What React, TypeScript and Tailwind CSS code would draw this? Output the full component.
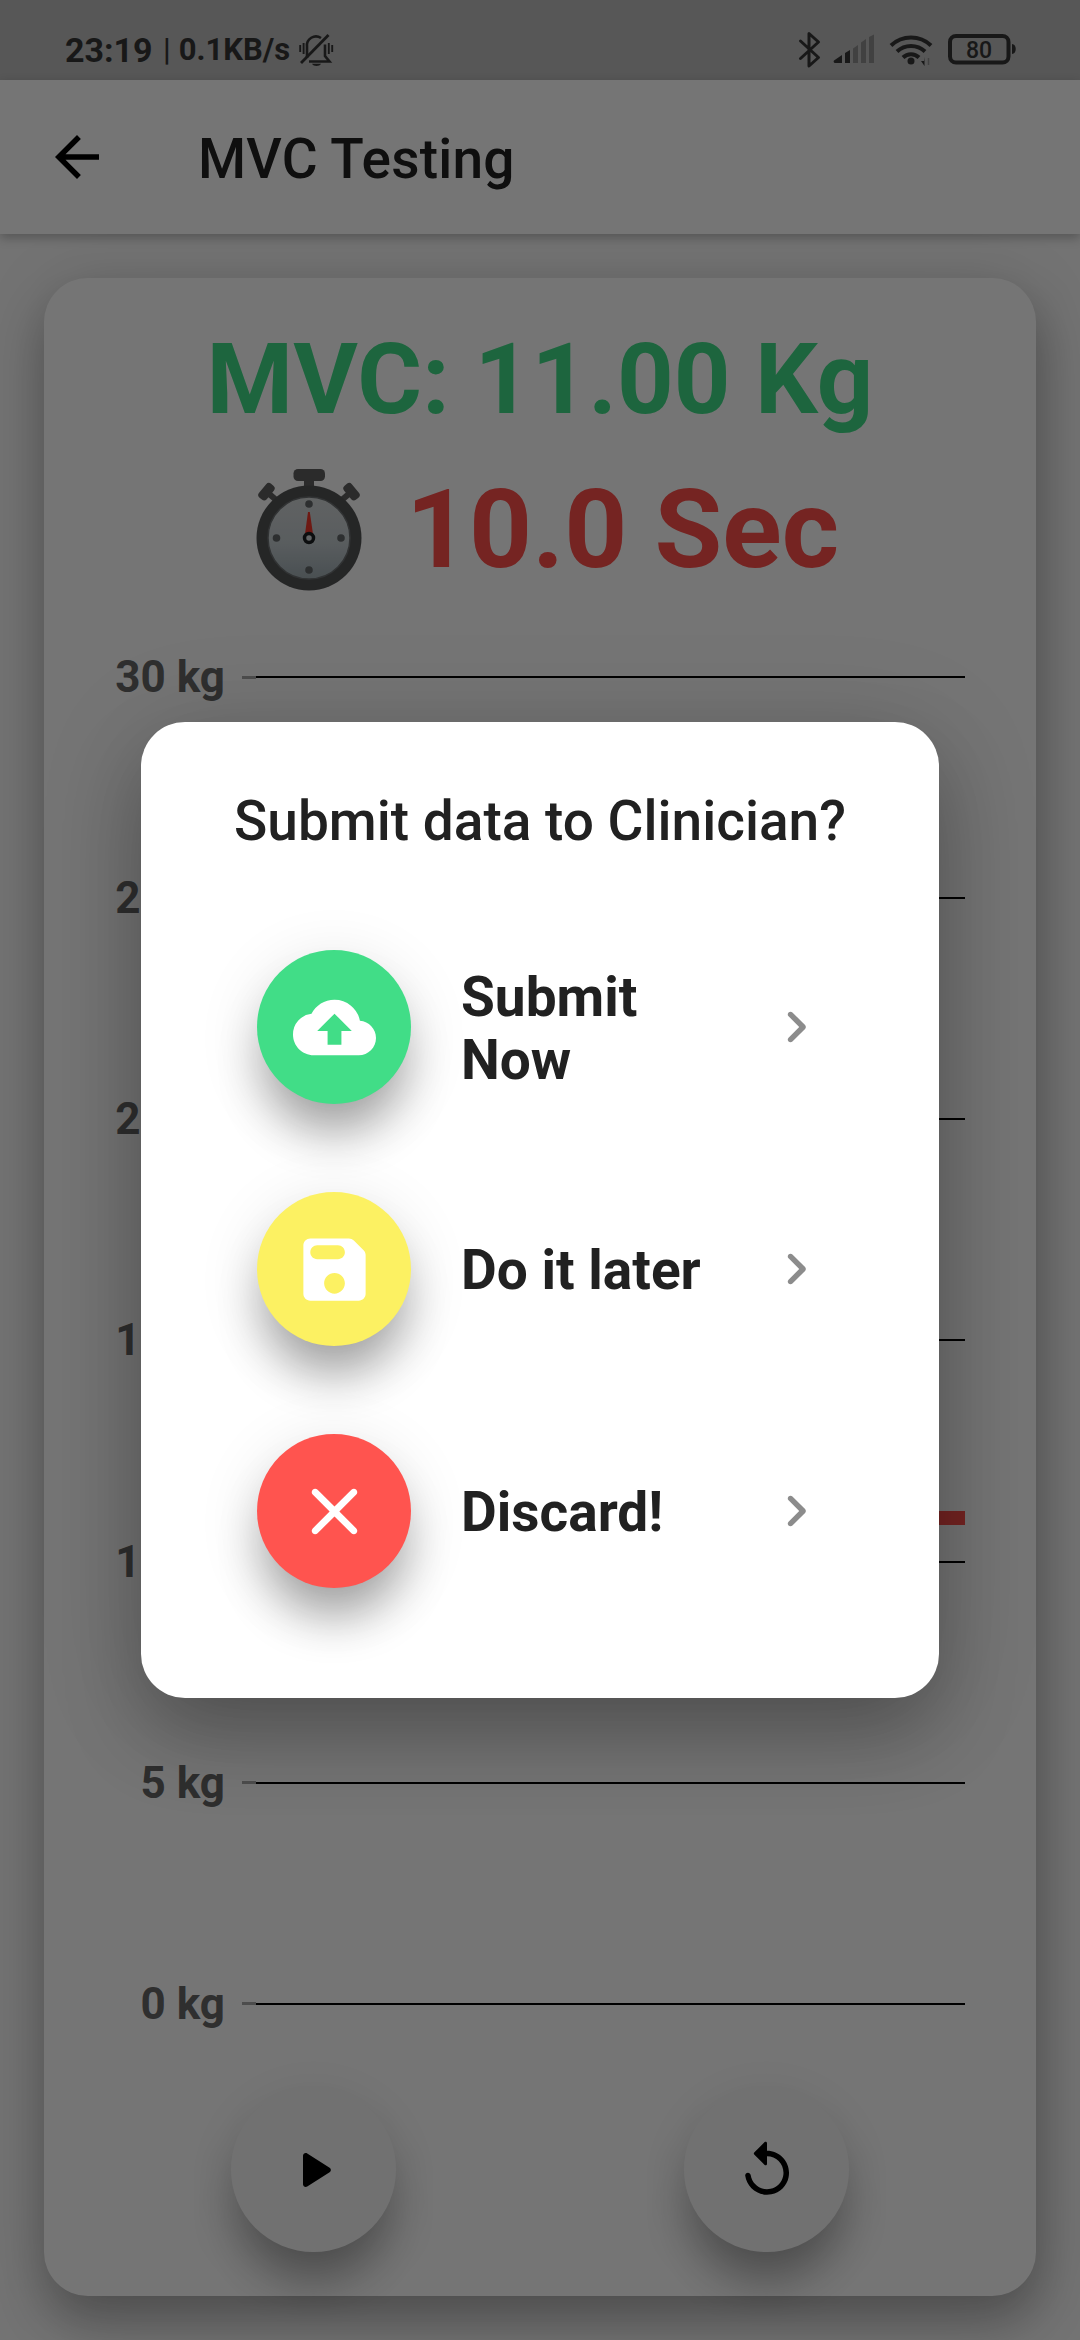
import React from "react";
import { MdArrowBack, MdCloudUpload } from "react-icons/md";

const levels = [30, 25, 20, 15, 10, 5, 0];

const ICON = {
  save: "M17.59 3.59c-.38-.38-.89-.59-1.42-.59H5c-1.11 0-2 .9-2 2v14c0 1.1.9 2 2 2h14c1.1 0 2-.9 2-2V7.83c0-.53-.21-1.04-.59-1.41l-2.82-2.83zM12 19c-1.66 0-3-1.34-3-3s1.34-3 3-3 3 1.34 3 3-1.34 3-3 3zm1-10H7c-1.1 0-2-.9-2-2s.9-2 2-2h6c1.1 0 2 .9 2 2s-.9 2-2 2z",
  close:
    "M18.3 5.71c-.39-.39-1.02-.39-1.41 0L12 10.59 7.11 5.7c-.39-.39-1.02-.39-1.41 0s-.39 1.02 0 1.41L10.59 12 5.7 16.89c-.39.39-.39 1.02 0 1.41s1.02.39 1.41 0L12 13.41l4.89 4.89c.39.39 1.02.39 1.41 0s.39-1.02 0-1.41L13.41 12l4.89-4.89c.38-.38.38-1.02 0-1.4z",
  chevron:
    "M9.29 6.71c-.39.39-.39 1.02 0 1.41L13.17 12l-3.88 3.88c-.39.39-.39 1.02 0 1.41.39.39 1.02.39 1.41 0l4.59-4.59c.39-.39.39-1.02 0-1.41L10.7 6.7c-.38-.38-1.02-.38-1.41.01z",
  play: "M8 6.82v10.36c0 .79.87 1.27 1.54.84l8.14-5.18c.62-.39.62-1.29 0-1.69L9.54 5.98C8.87 5.55 8 6.03 8 6.82z",
  replay:
    "M12 5V2.21c0-.45-.54-.67-.85-.35l-3.8 3.79c-.2.2-.2.51 0 .71l3.79 3.79c.32.31.86.09.86-.36V7c3.73 0 6.68 3.42 5.86 7.29-.47 2.27-2.31 4.1-4.57 4.57-3.57.75-6.75-1.7-7.23-5.01-.07-.48-.49-.85-.98-.85-.6 0-1.08.53-1 1.13.62 4.39 4.8 7.64 9.53 6.72 3.12-.61 5.63-3.12 6.24-6.24C20.84 9.48 16.94 5 12 5z",
};

function Icon({ d, className }: { d: string; className: string }) {
  return (
    <svg viewBox="0 0 24 24" className={className} fill="currentColor">
      <path d={d} />
    </svg>
  );
}

function BellOff() {
  return (
    <svg viewBox="0 0 36 36" className="ml-[6px] h-9 w-9" fill="none" stroke="currentColor" strokeWidth="2.6">
      <path d="M9 26V14.500a9 9 0 0 1 14-8.500" />
      <path d="M11 29.500h20.500L27 24V12.500" />
      <path d="M3 31 30.500 3" strokeWidth="2.8" />
      <path d="M2.200 13v7M5.600 11v11M30.800 11v11M34.200 13v7" strokeWidth="1.900" />
      <path d="M14 31.800h9c-1.500 3-7.500 3-9 0z" fill="currentColor" stroke="none" />
    </svg>
  );
}

function StatusIcons() {
  return (
    <svg viewBox="796 30 224 40" className="mr-[60px] h-10 w-[224px]" fill="none">
      <path
        d="M800.500 41 818.500 57.500 809 66V33.500L818.500 42 800.500 58.500"
        stroke="currentColor"
        strokeWidth="3"
        strokeLinejoin="round"
        strokeLinecap="round"
      />
      <path d="M842 55v8h-7a1.500 1.500 0 0 1-1-2.500zM850 50v13h-5V53z" fill="currentColor" />
      <path d="M858 45v18h-5V48.500zM866 39v24h-5V42.500zM874 34.500V63h-5V37z" fill="#8f8f8f" />
      <g stroke="currentColor" strokeWidth="4">
        <path d="M891 45.500a29 29 0 0 1 40 0" />
        <path d="M897 51.500a20.500 20.500 0 0 1 28 0" />
        <path d="M903 57.500a11.500 11.500 0 0 1 16 0" />
      </g>
      <circle cx="911" cy="61" r="3.500" fill="currentColor" />
      <path d="M924.500 57v9l-3.500-5h3z" fill="currentColor" />
      <path d="M928.500 58v7" stroke="#8f8f8f" strokeWidth="1.500" />
      <rect x="950" y="36" width="58.500" height="26.500" rx="6" stroke="currentColor" strokeWidth="4" />
      <path d="M1012 44c5 0 5 10 0 10z" fill="currentColor" />
      <text x="979" y="57.500" textAnchor="middle" fontSize="23" fontWeight="500" fill="currentColor">
        80
      </text>
    </svg>
  );
}

function Stopwatch() {
  return (
    <svg viewBox="0 0 106 122" className="h-[122px] w-[106px] shrink-0">
      <defs>
        <linearGradient id="face" x1="0" y1="0" x2="0" y2="1">
          <stop offset="0" stopColor="#d2d6d7" />
          <stop offset="0.55" stopColor="#c3cbcf" />
          <stop offset="1" stopColor="#a0adb3" />
        </linearGradient>
      </defs>
      <g fill="#5f5f5f">
        <rect x="48" y="8" width="10" height="14" />
        <rect x="37.500" y="0" width="31.500" height="12" rx="4.500" />
        <g transform="rotate(-50 12 24)">
          <rect x="3" y="17" width="18" height="10" rx="3.500" />
          <rect x="9" y="25" width="6" height="9" />
        </g>
        <g transform="rotate(50 94 24)">
          <rect x="85" y="17" width="18" height="10" rx="3.500" />
          <rect x="91" y="25" width="6" height="9" />
        </g>
      </g>
      <circle cx="53" cy="69" r="52.500" fill="#525354" />
      <circle cx="53" cy="69" r="41" fill="url(#face)" stroke="#6c7072" strokeWidth="1.500" />
      <g fill="#63686a">
        <circle cx="53" cy="35" r="3.800" />
        <circle cx="53" cy="101" r="3.800" />
        <circle cx="20.500" cy="69" r="3.800" />
        <circle cx="85" cy="69" r="3.800" />
      </g>
      <path d="M52 43h1.800l3.200 22h-8z" fill="#f0372a" />
      <circle cx="53" cy="69" r="4.500" fill="#d4d8da" stroke="#1c2022" strokeWidth="3.500" />
    </svg>
  );
}

function RoundButton({ d }: { d: string }) {
  return (
    <button className="flex h-[165px] w-[165px] items-center justify-center rounded-full bg-[#f7f7f7] text-black shadow-[0_36px_46px_-8px_rgba(0,0,0,0.30),0_12px_60px_rgba(0,0,0,0.10)]">
      <Icon d={d} className="h-[66px] w-[66px]" />
    </button>
  );
}

function Option({ color, label, children }: { color: string; label: React.ReactNode; children: React.ReactNode }) {
  return (
    <div className="flex h-[154px] items-center">
      <div
        className={
          "flex h-[154px] w-[154px] shrink-0 items-center justify-center rounded-full text-white shadow-[0_36px_48px_-8px_rgba(0,0,0,0.32),0_12px_64px_rgba(0,0,0,0.12)] " +
          color
        }
      >
        {children}
      </div>
      <div className="ml-[50px] w-[302px] pt-[3px] text-[55px] leading-[63px] font-bold text-[#212121]">{label}</div>
      <Icon d={ICON.chevron} className="h-[66px] w-[66px] text-[#8c8c8c]" />
    </div>
  );
}

export default function App() {
  return (
    <div className="relative flex h-[2340px] w-[1080px] flex-col overflow-hidden bg-[#fafafa] font-['Roboto',sans-serif]">
      <div className="z-10 flex h-20 shrink-0 items-start justify-between bg-[#bdbdbd] pt-[30px] text-[#363636]">
        <div className="flex h-10 items-center pl-[65px] font-bold">
          <span className="w-[89px] text-[34px] whitespace-nowrap">23:19</span>
          <span className="ml-[9px] text-[31px] font-medium">|</span>
          <span className="ml-[8px] w-[113px] text-[31px] whitespace-nowrap">0.1KB/s</span>
          <BellOff />
        </div>
        <StatusIcons />
      </div>
      <header className="z-10 flex h-[154px] shrink-0 items-center bg-white pl-[44px] shadow-[0_4px_10px_rgba(0,0,0,0.25)]">
        <MdArrowBack className="h-[66px] w-[66px] text-black" />
        <h1 className="ml-[88px] pt-[4px] text-[55px] font-medium tracking-[0.2px] text-[#212121]">MVC Testing</h1>
      </header>

      <main className="mx-[44px] mt-[44px] flex h-[2018px] shrink-0 flex-col rounded-[44px] bg-white shadow-[3px_26px_50px_rgba(0,0,0,0.28),0_4px_70px_rgba(0,0,0,0.10)]">
        <div className="mt-[41px] h-[120px] text-center text-[99px] leading-[120px] font-bold text-[#41dd87]">
          MVC: 11.00 Kg
        </div>
        <div className="flex h-[181px] items-center pl-[212px]">
          <Stopwatch />
          <span className="ml-[44px] text-[110px] font-bold whitespace-nowrap text-[#ff4f4a]">10.0 Sec</span>
        </div>
        <div className="relative mt-[27px] flex h-[1387px] flex-col justify-between pr-[71px]">
          {levels.map((kg) => (
            <div key={kg} className="flex h-[60px] items-center">
              <span className="w-[181px] text-right text-[44px] font-bold text-[#666]">{kg} kg</span>
              <span className="ml-[17px] h-[3px] w-[14px] bg-[#a8a8a8]" />
              <span className="h-[2px] flex-1 bg-black" />
            </div>
          ))}
          <div className="absolute top-[864px] right-[71px] left-[212px] h-[14px] bg-[#ff4f4a]" />
        </div>
        <div className="mt-[53px] flex justify-between pr-[187px] pl-[187px]">
          <RoundButton d={ICON.play} />
          <RoundButton d={ICON.replay} />
        </div>
      </main>

      <div className="absolute inset-0 z-20 flex items-start justify-center bg-black/54 pt-[722px]">
        <div
          role="dialog"
          className="flex h-[976px] w-[798px] flex-col rounded-[44px] bg-white shadow-[0_38px_80px_-4px_rgba(0,0,0,0.26),0_12px_110px_rgba(0,0,0,0.13)]"
        >
          <h2 className="mt-[67px] h-[64px] text-center text-[55px] leading-[64px] font-medium text-[#212121]">
            Submit data to Clinician?
          </h2>
          <div className="mt-[97px] flex flex-col gap-[88px] pl-[116px]">
            <Option
              color="bg-[#41dd87]"
              label={
                <>
                  Submit
                  <br />
                  Now
                </>
              }
            >
              <MdCloudUpload className="h-[83px] w-[83px]" />
            </Option>
            <Option color="bg-[#fcf162]" label="Do it later">
              <Icon d={ICON.save} className="h-[83px] w-[83px]" />
            </Option>
            <Option color="bg-[#ff544f]" label="Discard!">
              <Icon d={ICON.close} className="h-[83px] w-[83px]" />
            </Option>
          </div>
        </div>
      </div>
    </div>
  );
}
